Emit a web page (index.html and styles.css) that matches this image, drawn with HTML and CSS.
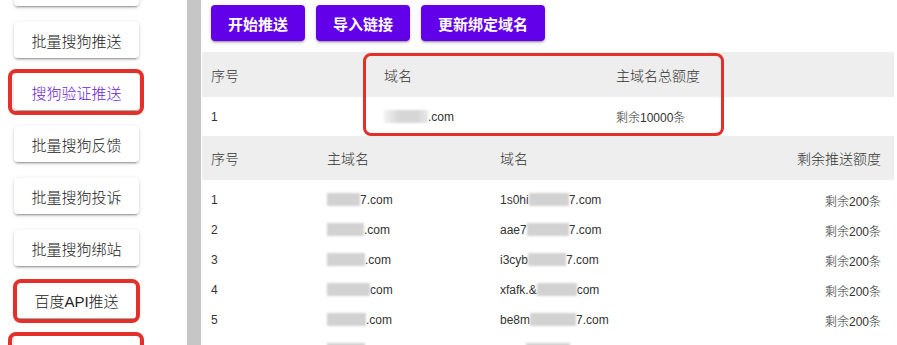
FILE: index.html
```html
<!DOCTYPE html>
<html lang="zh-CN">
<head>
    <meta charset="UTF-8">
    <meta name="viewport" content="width=device-width, initial-scale=1.0">
    <title>搜狗验证推送</title>
    <link rel="stylesheet" href="styles.css">
</head>
<body>
    <aside class="sidebar">
        <div class="side-list">
            <a class="side-btn" href="#">批量搜狗收录</a>
            <a class="side-btn" href="#">批量搜狗推送</a>
            <a class="side-btn active" href="#">搜狗验证推送</a>
            <a class="side-btn" href="#">批量搜狗反馈</a>
            <a class="side-btn" href="#">批量搜狗投诉</a>
            <a class="side-btn" href="#">批量搜狗绑站</a>
            <a class="side-btn" href="#">百度API推送</a>
            <a class="side-btn" href="#">百度API收录</a>
        </div>
        <div class="mark mark-verify"></div>
        <div class="mark mark-baidu"></div>
        <div class="mark mark-next"></div>
    </aside>

    <div class="divider"></div>

    <main class="content">
        <div class="toolbar">
            <button class="btn">开始推送</button>
            <button class="btn">导入链接</button>
            <button class="btn">更新绑定域名</button>
        </div>

        <table class="grid grid-quota">
            <colgroup>
                <col style="width: 173px">
                <col style="width: 232px">
                <col>
            </colgroup>
            <thead>
                <tr><th>序号</th><th>域名</th><th>主域名总额度</th></tr>
            </thead>
            <tbody>
                <tr>
                    <td>1</td>
                    <td><span class="blur soft" style="width: 44px"></span>.com</td>
                    <td>剩余10000条</td>
                </tr>
            </tbody>
        </table>

        <table class="grid grid-list">
            <colgroup>
                <col style="width: 116px">
                <col style="width: 173px">
                <col>
                <col style="width: 200px">
            </colgroup>
            <thead>
                <tr><th>序号</th><th>主域名</th><th>域名</th><th class="right">剩余推送额度</th></tr>
                <tr class="spacer"><td colspan="4"></td></tr>
            </thead>
            <tbody>
                <tr>
                    <td>1</td>
                    <td><span class="blur" style="width: 33px"></span>7.com</td>
                    <td>1s0hi<span class="blur" style="width: 40px"></span>7.com</td>
                    <td class="right">剩余200条</td>
                </tr>
                <tr>
                    <td>2</td>
                    <td><span class="blur" style="width: 37px"></span>.com</td>
                    <td>aae7<span class="blur" style="width: 42px"></span>7.com</td>
                    <td class="right">剩余200条</td>
                </tr>
                <tr>
                    <td>3</td>
                    <td><span class="blur" style="width: 38px"></span>.com</td>
                    <td>i3cyb<span class="blur" style="width: 38px"></span>7.com</td>
                    <td class="right">剩余200条</td>
                </tr>
                <tr>
                    <td>4</td>
                    <td><span class="blur" style="width: 43px"></span>com</td>
                    <td>xfafk.&amp;<span class="blur" style="width: 40px"></span>com</td>
                    <td class="right">剩余200条</td>
                </tr>
                <tr>
                    <td>5</td>
                    <td><span class="blur" style="width: 39px"></span>.com</td>
                    <td>be8m<span class="blur" style="width: 46px"></span>7.com</td>
                    <td class="right">剩余200条</td>
                </tr>
                <tr>
                    <td>6</td>
                    <td><span class="blur" style="width: 38px"></span>.com</td>
                    <td>k2pd<span class="blur" style="width: 44px"></span>7.com</td>
                    <td class="right">剩余200条</td>
                </tr>
            </tbody>
        </table>

        <div class="mark mark-table"></div>
    </main>
</body>
</html>
```

FILE: styles.css
```css
body {
    margin: 0;
    height: 345px;
    overflow: hidden;
    display: flex;
    flex-direction: row;
    background: #fff;
    color: #333;
    font-family: "Liberation Sans", "Noto Sans CJK SC", sans-serif;
}

/* left menu */
.sidebar {
    position: relative;
    width: 187px;
    flex-shrink: 0;
    background: #fff;
}

.side-list {
    display: flex;
    flex-direction: column;
    gap: 16px;
    margin-top: -30px;
    padding-left: 14px;
}

.side-btn {
    display: flex;
    align-items: center;
    justify-content: center;
    width: 125px;
    height: 36px;
    box-sizing: border-box;
    background: #fff;
    border-radius: 4px;
    box-shadow: 0 3px 1px -2px rgba(0,0,0,0.2), 0 2px 2px 0 rgba(0,0,0,0.14), 0 1px 5px 0 rgba(0,0,0,0.12);
    color: #222;
    font-size: 15px;
    font-weight: 300;
    text-decoration: none;
}

.side-btn.active {
    color: #6a22d6;
}

.divider {
    width: 14px;
    flex-shrink: 0;
    background: #c6c6c6;
}

/* main area */
.content {
    position: relative;
    flex: 1;
    padding: 5px 3px 0 1px;
}

.toolbar {
    display: flex;
    gap: 11px;
    padding-left: 9px;
    margin-bottom: 11px;
}

.btn {
    height: 36px;
    padding: 0 17px;
    border: none;
    border-radius: 4px;
    background: #6200ea;
    color: #fff;
    font-family: inherit;
    font-size: 15px;
    font-weight: bold;
    box-shadow: 0 3px 1px -2px rgba(0,0,0,0.2), 0 2px 2px 0 rgba(0,0,0,0.14), 0 1px 5px 0 rgba(0,0,0,0.12);
    cursor: pointer;
}

.grid {
    width: 100%;
    table-layout: fixed;
    border-collapse: collapse;
}

.grid th {
    background: #eeeeee;
    font-size: 14px;
    font-weight: 300;
    text-align: left;
    padding: 0 9px;
    color: #333;
}

.grid td {
    font-size: 12px;
    font-weight: 300;
    padding: 0 9px;
    white-space: nowrap;
    color: #333;
}

.grid .right {
    text-align: right;
    padding-right: 13px;
}

.grid-quota thead tr {
    height: 45px;
}

.grid-quota tbody tr {
    height: 39px;
}

.grid-list thead tr {
    height: 44px;
}

.grid-list .spacer {
    height: 5px;
}

.grid-list tbody tr {
    height: 30px;
}

/* masked part of a domain */
.blur {
    display: inline-block;
    height: 13px;
    vertical-align: -2px;
    background: #d2d2d2;
    filter: blur(1.2px);
}

.blur.soft {
    background: linear-gradient(90deg, #f2f2f2, #d6d6d6 35%, #d6d6d6 75%, #e8e8e8);
}

/* red annotation frames */
.mark {
    position: absolute;
    box-sizing: border-box;
    border: 4px solid #e3302a;
    border-radius: 8px;
}

.mark-verify {
    left: 8px;
    top: 69px;
    width: 136px;
    height: 46px;
}

.mark-baidu {
    left: 13px;
    top: 279px;
    width: 127px;
    height: 44px;
}

.mark-next {
    left: 8px;
    top: 332px;
    width: 136px;
    height: 44px;
}

.mark-table {
    left: 162px;
    top: 53px;
    width: 361px;
    height: 83px;
    border-width: 3px;
}
```
